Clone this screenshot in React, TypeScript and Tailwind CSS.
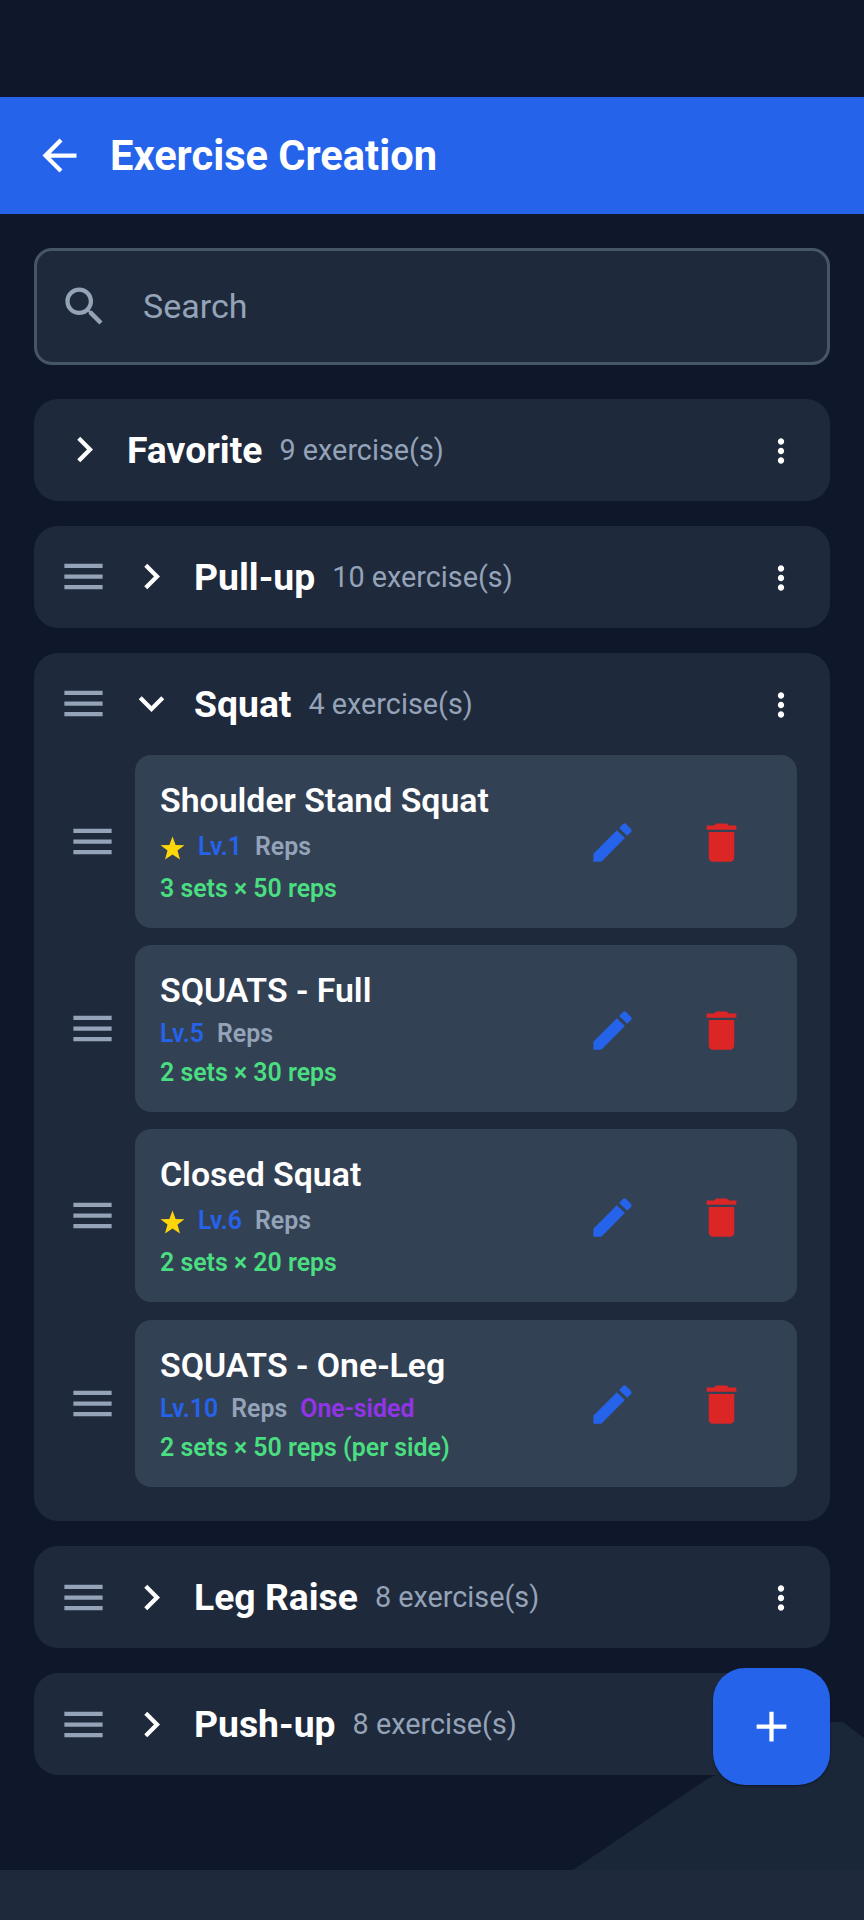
import { MdAdd, MdArrowBack, MdChevronRight, MdDelete, MdEdit, MdExpandMore, MdMenu, MdMoreVert, MdSearch } from "react-icons/md";

interface IExercise {
	name: string;
	level: number;
	favorite?: boolean;
	oneSided?: boolean;
	sets: string;
}

const squats: IExercise[] = [
	{ name: "Shoulder Stand Squat", level: 1, favorite: true, sets: "3 sets × 50 reps" },
	{ name: "SQUATS - Full", level: 5, sets: "2 sets × 30 reps" },
	{ name: "Closed Squat", level: 6, favorite: true, sets: "2 sets × 20 reps" },
	{ name: "SQUATS - One-Leg", level: 10, oneSided: true, sets: "2 sets × 50 reps (per side)" },
];

function CategoryHeader({ title, count, open, draggable = true }: { title: string; count: number; open?: boolean; draggable?: boolean }) {
	return (
		<div className={`flex h-[101.5px] items-center gap-[17px] pr-[30px] ${draggable ? "pl-[24px]" : "pl-[25px]"}`}>
			{draggable && <MdMenu size={51} className="shrink-0 text-[#94a3b8]" />}
			{open ? (
				<MdExpandMore size={51} className="shrink-0 text-white" />
			) : (
				<MdChevronRight size={51} className="shrink-0 text-white" />
			)}
			<span className="text-[37.3px] leading-[46px] font-bold text-white">{title}</span>
			<span className="text-[28.8px] leading-[42px] text-[#94a3b8]">{count} exercise(s)</span>
			<MdMoreVert size={38} className="ml-auto shrink-0 translate-y-[1px] text-white" />
		</div>
	);
}

function ExerciseRow({ exercise }: { exercise: IExercise }) {
	return (
		<div className="flex items-center gap-[17px]">
			<MdMenu size={51} className="shrink-0 text-[#94a3b8]" />
			<div className="flex flex-1 items-center rounded-[16px] bg-[#334155] pt-[25px] pr-[50.5px] pb-[24px] pl-[25px]">
				<div className="flex flex-1 flex-col">
					<span className="text-[33.85px] leading-[42px] font-semibold text-white">{exercise.name}</span>
					<div className="mt-[7px] flex items-center gap-[13px] text-[24.9px] leading-[30px] font-semibold">
						{exercise.favorite && (
							<svg width="25" height="36" viewBox="0 0 24 24" className="shrink-0 translate-y-[1px]">
								<polygon points="12,1 15,9 23.5,9.3 16.8,14.5 19.2,23 12,18.2 4.8,23 7.2,14.5 0.5,9.3 9,9" fill="#ffd60a" />
							</svg>
						)}
						<span className="text-[#2563eb]">Lv.{exercise.level}</span>
						<span className="text-[#94a3b8]">Reps</span>
						{exercise.oneSided && <span className="text-[#9333ea]">One-sided</span>}
					</div>
					<span className="mt-[9px] text-[24.9px] leading-[30px] font-semibold text-[#4ade80]">{exercise.sets}</span>
				</div>
				<div className="mt-[2px] flex items-center gap-[58px]">
					<MdEdit size={51} className="text-[#2563eb]" />
					<MdDelete size={51} className="text-[#dc2626]" />
				</div>
			</div>
		</div>
	);
}

export default function App() {
	return (
		<div className="relative flex h-[1920px] flex-col overflow-hidden bg-[#0f172a] font-['Roboto',sans-serif]">
			<div className="mt-[97px] flex h-[117px] items-center gap-[25px] bg-[#2563eb] pl-[34px]">
				<MdArrowBack size={51} className="text-white" />
				<span className="text-[41.6px] leading-[48px] font-bold text-white">Exercise Creation</span>
			</div>

			<div className="flex flex-col px-[34px] pt-[34px]">
				<div className="flex h-[117px] items-center gap-[33px] rounded-[18px] border-[3px] border-[#475569] bg-[#1e293b] pl-[22px]">
					<MdSearch size={51} className="text-[#94a3b8]" />
					<span className="text-[34px] text-[#94a3b8]">Search</span>
				</div>
				<div className="mt-[34px] flex flex-col gap-[25.6px]">
					<div className="rounded-[24px] bg-[#1e293b]">
						<CategoryHeader title="Favorite" count={9} draggable={false} />
					</div>
					<div className="rounded-[24px] bg-[#1e293b]">
						<CategoryHeader title="Pull-up" count={10} />
					</div>
					<div className="rounded-[24px] bg-[#1e293b] pb-[34px]">
						<CategoryHeader title="Squat" count={4} open />
						<div className="flex flex-col gap-[17.33px] pr-[33px] pl-[33px]">
							{squats.map((exercise) => (
								<ExerciseRow key={exercise.name} exercise={exercise} />
							))}
						</div>
					</div>
					<div className="rounded-[24px] bg-[#1e293b]">
						<CategoryHeader title="Leg Raise" count={8} />
					</div>
					<div className="rounded-[24px] bg-[#1e293b]">
						<CategoryHeader title="Push-up" count={8} />
					</div>
				</div>
			</div>

			<svg className="absolute right-0 bottom-[50px]" width="291" height="148" viewBox="0 0 291 148">
				<path d="M0 148 L134 57 L259 0 L270 0 L291 16 L291 148 Z" fill="#1a2739" />
			</svg>
			<div className="mt-auto h-[50px] bg-[#1e293b]" />

			<div className="absolute top-[1668px] left-[713px] flex h-[117px] w-[117px] items-center justify-center rounded-[32px] bg-[#2563eb] shadow-[0_1px_2px_rgba(0,0,0,0.5)]">
				<MdAdd size={51} className="text-white" />
			</div>
		</div>
	);
}
